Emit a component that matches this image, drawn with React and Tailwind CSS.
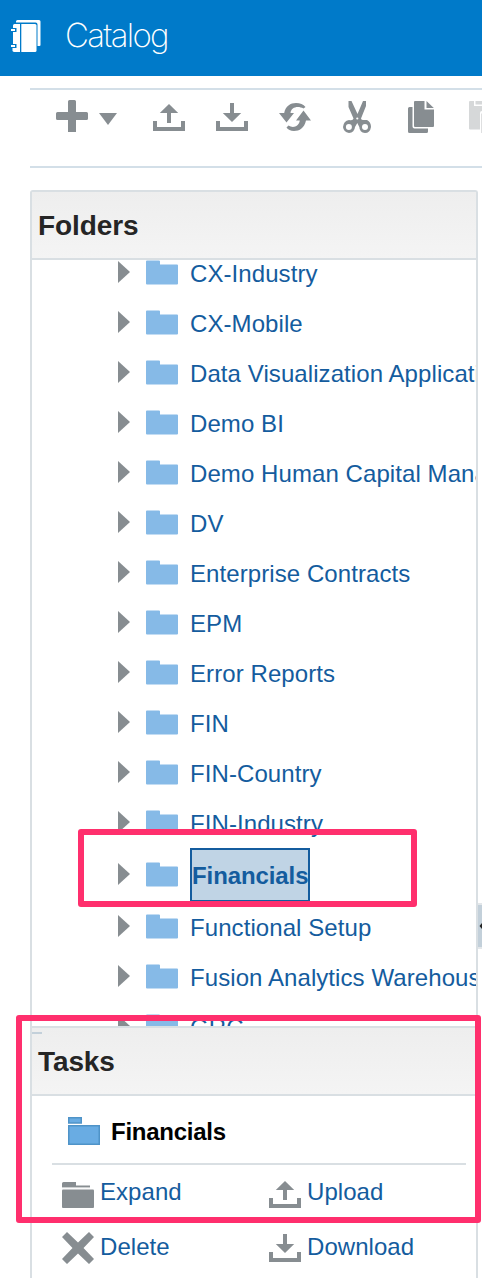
import React from "react";

const FOLDERS_BEFORE = [
  "CX-Industry",
  "CX-Mobile",
  "Data Visualization Applications",
  "Demo BI",
  "Demo Human Capital Management",
  "DV",
  "Enterprise Contracts",
  "EPM",
  "Error Reports",
  "FIN",
  "FIN-Country",
  "FIN-Industry",
];
const FOLDERS_AFTER = ["Functional Setup", "Fusion Analytics Warehouse", "GRC"];

function Icon({ children, className = "" }) {
  return (
    <svg viewBox="0 0 32 32" fill="#878d91" className={`h-8 w-8 shrink-0 ${className}`}>
      {children}
    </svg>
  );
}

function CatalogIcon() {
  return (
    <svg viewBox="0 0 30 32" fill="#fff" className="h-8 w-[30px] shrink-0">
      <path d="M5 1.500Q5 0 6.500 0H28Q29.500 0 29.500 1.500V25Q29.500 26 28.500 26H26.500V4.500Q26.500 2.500 24.500 2.500H5Z" />
      <path d="M2 5.500Q2 4 3.500 4H9V32H3.500Q2 32 1.500 31V28H5.500V24H2V12H5.500V8H2Z" />
      <path d="M10.300 4H24Q25.500 4 25.500 5.500V30.500Q25.500 32 24 32H10.300Z" />
      <path d="M0 9H4V11H0ZM0 25H4V27H0Z" />
    </svg>
  );
}

function PlusIcon() {
  return (
    <Icon>
      <path d="M12 1.500Q12 0 13.500 0H18.500Q20 0 20 1.500V12H30.500Q32 12 32 13.500V18.500Q32 20 30.500 20H20V32H12V20H1.500Q0 20 0 18.500V13.500Q0 12 1.500 12H12Z" />
    </Icon>
  );
}

function UploadIcon({ className }) {
  return (
    <Icon className={className}>
      <path d="M16 3L25.200 12H18V22H14V12H6.800Z" />
      <path d="M0 20H4V26H28V20H32V30H0Z" />
    </Icon>
  );
}

function DownloadIcon({ className }) {
  return (
    <Icon className={className}>
      <path d="M14 2H18V12H25.200L16 21L6.800 12H14Z" />
      <path d="M0 20H4V26H28V20H32V30H0Z" />
    </Icon>
  );
}

function RefreshIcon() {
  return (
    <Icon>
      <path d="M0 12H5.200C6.500 5 11.500 2 17 2C21 2 24.500 3.500 26.500 6L24.500 7.500C19 4.500 12 6 11.500 12H15L7.500 21.500Z" />
      <path d="M32 19.500H27C25.500 27 20.500 30 15 30C11.500 30 9 28.500 7.500 26.500L9.500 24.500C14 27.500 20 25.500 20.800 19.500H17L24.500 9.500Z" />
    </Icon>
  );
}

function ScissorsIcon() {
  return (
    <Icon className="-ml-px mr-px">
      <path d="M7.500 0H10.500L16.500 13L22 0H25L25 5L20 17.500Q20.500 19.500 23 19H26Q30 21 30 26Q29 32 24 32Q18.500 31.500 18.300 26L16.300 22L14 26Q13.500 31.500 8 32Q2.500 31 2 26Q2.500 20 8 19Q12 20 12.500 17.500L7.500 6Z" />
      <circle cx="7.900" cy="26" r="3" fill="#fff" />
      <circle cx="24" cy="26" r="3" fill="#fff" />
      <circle cx="16.300" cy="17.500" r="1.100" fill="#fff" />
    </Icon>
  );
}

function CopyIcon() {
  return (
    <Icon>
      <path d="M3 7.500Q3 6 4.500 6H7.500V25.500Q7.500 27.500 9.500 27.500H23V30.500Q23 32 21.500 32H4.500Q3 32 3 30.500Z" />
      <path d="M9 1Q9 0 10 0H19.500V8.500H29V25Q29 26 28 26H10Q9 26 9 25Z" />
      <path d="M21.500 0L28.800 7H21.500Z" />
    </Icon>
  );
}

function PasteIcon() {
  return (
    <svg viewBox="0 0 13 32" fill="#d6d8d9" className="ml-px h-8 w-[13px] shrink-0">
      <path d="M0 1Q0 0 1 0H5V5H13V10Q11 10 11 12V28.500H1Q0 28.500 0 27.500Z" />
      <path d="M6.500 0H13V3.500H6.500ZM12.200 12.500H13V32H12.200Z" />
    </svg>
  );
}

function FolderIcon() {
  return (
    <svg viewBox="0 0 32 25" fill="#86bae7" className="h-[25px] w-8 shrink-0">
      <path d="M0 1.500Q0 .5 1 .5H13Q14 .5 14 1.500V4.500H31Q32 4.500 32 5.500V23.500Q32 24.500 31 24.500H1Q0 24.500 0 23.500Z" />
    </svg>
  );
}

function FolderRow({ name, selected }) {
  return (
    <div className={`flex shrink-0 items-center pl-[86px] ${selected ? "h-[54px]" : "h-[50px]"}`}>
      <svg viewBox="0 0 12 22" fill="#878d91" className="mb-1 h-[22px] w-3 shrink-0">
        <path d="M0 0L12 11L0 22Z" />
      </svg>
      <span className="mr-3 mb-[3px] ml-4 flex">
        <FolderIcon />
      </span>
      {selected ? (
        <span className="-mt-0.5 h-[54px] w-[120px] border-2 border-[#145c9e] bg-[#c0d4e5] text-[24px] leading-[51px] font-bold tracking-[-0.1px] whitespace-nowrap text-[#145c9e]">
          {name}
        </span>
      ) : (
        <span className="text-[24px] leading-[50px] tracking-[0.08px] whitespace-nowrap text-[#145c9e]">{name}</span>
      )}
    </div>
  );
}

function PanelHeader({ title }) {
  return (
    <h2 className="h-[68px] shrink-0 border-b-2 border-[#d9dfe3] bg-linear-to-b from-[#eeeeee] to-[#f4f4f4] pl-1.5 text-[28px] leading-[67px] font-bold tracking-[-0.1px] text-[#252525]">
      {title}
    </h2>
  );
}

export default function App() {
  return (
    <div className="relative flex h-[1278px] w-[482px] flex-col overflow-hidden bg-white font-['Liberation_Sans',Arial,sans-serif]">
      <header className="flex h-[76px] shrink-0 items-center bg-[#007ac9] pb-1 pl-[11px]">
        <CatalogIcon />
        <h1 className="mb-0.5 ml-6 font-[Inter,sans-serif] text-[33px] leading-[40px] font-extralight tracking-[-1.7px] text-white">
          Catalog
        </h1>
      </header>

      <div className="mt-3 ml-[30px] flex h-20 shrink-0 items-start border-y-2 border-[#d3dfe8] pt-[11px] pl-[26px]">
        <div className="-mt-px flex items-start">
          <PlusIcon />
          <svg viewBox="0 0 18 12" fill="#878d91" className="mt-[13px] ml-[11px] h-3 w-[18px]">
            <path d="M0 0H18L9 12Z" />
          </svg>
        </div>
        <div className="ml-9 flex gap-[31px]">
          <UploadIcon />
          <DownloadIcon />
          <RefreshIcon />
          <ScissorsIcon />
          <CopyIcon />
          <PasteIcon />
        </div>
      </div>

      <div className="mt-[22px] flex min-h-0 flex-1 pl-[30px]">
        <div className="flex w-[448px] shrink-0 flex-col rounded-t-[3px] border-2 border-b-0 border-[#d9dfe3]">
          <PanelHeader title="Folders" />
          <div className="flex h-[766px] shrink-0 flex-col overflow-hidden">
            <div className="-mt-[11px] flex flex-col">
              {FOLDERS_BEFORE.map((name) => (
                <FolderRow key={name} name={name} />
              ))}
              <FolderRow name="Financials" selected />
              {FOLDERS_AFTER.map((name) => (
                <FolderRow key={name} name={name} />
              ))}
            </div>
          </div>
          <div className="relative shrink-0 border-t-2 border-[#d9dfe3]">
            <PanelHeader title="Tasks" />
            <div className="absolute top-1 left-0 h-0.5 w-2.5 bg-[#c3d0da]" />
          </div>
          <div className="flex h-[67px] shrink-0 items-center pl-9">
            <svg viewBox="0 0 32 29" className="mt-1 h-[29px] w-8" fill="#69ace3" stroke="#4f93c8" strokeWidth="1.500">
              <path d="M.75 .75H13.250V6H.75ZM.75 8.750H31.250V27.250H.75Z" />
            </svg>
            <span className="mt-1 ml-[11px] text-[24px] leading-8 font-bold tracking-[-0.25px] text-black">Financials</span>
          </div>
          <div className="mr-2.5 ml-5 h-0.5 shrink-0 bg-[#d9dfe3]" />
          <div className="grid grid-cols-[207px_auto] grid-rows-[55px_55px] pl-[30px] text-[24px] tracking-[0.05px] text-[#145c9e]">
            <div className="flex items-center gap-1.5">
              <Icon className="mt-[5px]">
                <path d="M0 4.500Q0 3 1.500 3H14V6.500H28V9H0Z" />
                <path d="M0 11.500Q0 10.500 1 10.500H31Q32 10.500 32 11.500V28Q32 29 31 29H1Q0 29 0 28Z" />
                <path d="M0 8.200H28V9.200H0Z" fill="#dfe1e2" />
              </Icon>
              <span className="mb-0.5">Expand</span>
            </div>
            <div className="flex items-center gap-1.5">
              <UploadIcon className="mt-[3px]" />
              <span className="mb-0.5">Upload</span>
            </div>
            <div className="flex items-center gap-1.5">
              <Icon className="mt-px">
                <path d="M5 0L16 10.500L27 0L32 5L21.500 16L32 27L27 32L16 21.500L5 32L0 27L10.500 16L0 5Z" />
              </Icon>
              <span className="mb-0.5">Delete</span>
            </div>
            <div className="flex items-center gap-1.5">
              <DownloadIcon className="mt-px" />
              <span className="mb-0.5">Download</span>
            </div>
          </div>
        </div>
        <div className="mt-[713px] h-[46px] w-1 border-y-2 border-[#e3e7ea] bg-[#c3d0da]">
          <svg viewBox="0 0 4 42" className="h-[42px] w-1" fill="#222">
            <path d="M1.500 21L4 18V24Z" />
          </svg>
        </div>
      </div>

      <div className="pointer-events-none absolute top-[829px] left-[78px] h-[78px] w-[339px] rounded-[3px] border-6 border-[#ff2f6d]" />
      <div className="pointer-events-none absolute top-[1015px] left-[16px] h-[208px] w-[465px] rounded-[3px] border-6 border-[#ff2f6d]" />
    </div>
  );
}
